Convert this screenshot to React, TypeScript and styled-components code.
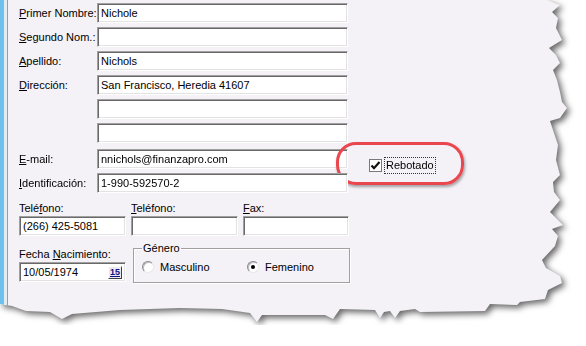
import React from 'react'
import styled, { createGlobalStyle } from 'styled-components'

const GlobalStyle = createGlobalStyle`
body {
    margin: 0;
    background: #ffffff;
    font-family: "Liberation Sans", Arial, sans-serif;
    font-size: 11px;
    color: #000;
}
`

const torn = `polygon(
0px 0px, 547px 0px, 552px 2px, 560px 5px, 552px 12px, 558px 18px, 556px 28px, 562px 40px,
549px 48px, 556px 55px, 560px 63px, 553px 70px, 557px 80px, 560px 92px, 562px 102px, 567px 108px,
560px 118px, 550px 121px, 553px 130px, 558px 145px, 556px 160px, 560px 175px, 553px 182px,
554px 192px, 560px 200px, 550px 212px, 558px 220px, 563px 225px, 552px 229px, 558px 236px,
555px 246px, 542px 260px, 546px 268px, 560px 276px, 562px 283px, 548px 290px, 545px 299px,
520px 302px, 517px 305px, 490px 304px, 485px 311px, 420px 312px, 415px 309px, 400px 311px,
395px 318px, 390px 311px, 384px 312px, 380px 318px, 375px 310px, 340px 309px, 333px 319px,
325px 315px, 262px 315px, 257px 322px, 250px 313px, 222px 309px, 180px 308px, 120px 310px,
72px 314px, 62px 319px, 50px 312px, 26px 311px, 12px 306px, 0px 304px)`

const Sheet = styled.div`
width: 586px;
filter: drop-shadow(3px 3px 3px rgba(0, 0, 0, 0.6));
`

const Paper = styled.div`
height: 325px;
display: flex;
background: #f4f1f7;
clip-path: ${torn};
`

const FrameEdge = styled.div`
width: 8px;
flex-shrink: 0;
background: linear-gradient(to right, #6fc1ed 0 4px, #e2ebf1 4px 7px, #9c9c9c 7px 8px);
`

const Form = styled.div`
padding: 3px 0 0 11px;
display: flex;
flex-direction: column;
`

const FieldRow = styled.div<{ $gapTop?: number }>`
position: relative;
display: grid;
grid-template-columns: 78px 251px;
align-items: center;
margin-top: ${p => p.$gapTop ?? 4}px;
&:first-child { margin-top: 0; }
`

const Label = styled.span`
line-height: 13px;
white-space: nowrap;
`

const TextBox = styled.div<{ $w?: number }>`
box-sizing: border-box;
width: ${p => (p.$w ? `${p.$w}px` : '100%')};
height: 20px;
padding: 0 3px;
display: flex;
align-items: center;
background: #fff;
border: 1px solid;
border-color: #a0a0a0 #ffffff #ffffff #a0a0a0;
box-shadow: inset 1px 1px 0 #696969, inset -1px -1px 0 #e3e3e3;
white-space: nowrap;
`

const Highlight = styled.div`
position: absolute;
left: 317px;
top: -7px;
width: 128px;
height: 43px;
box-sizing: border-box;
border: 3px solid #e9464d;
border-radius: 20px;
box-shadow: 1px 2px 3px rgba(0, 0, 0, 0.35);
display: flex;
align-items: center;
padding: 4px 0 0 30px;
`

const CheckBox = styled.span`
box-sizing: border-box;
width: 13px;
height: 13px;
background: #fff;
border: 1px solid #7a7a7a;
display: flex;
align-items: center;
justify-content: center;
`

const FocusText = styled.span`
margin-left: 3px;
padding: 1px 1px;
line-height: 13px;
outline: 1px dotted #333;
`

const PhoneGrid = styled.div`
display: grid;
grid-template-columns: 107px 107px 106px;
column-gap: 5px;
row-gap: 1px;
margin-top: 9px;
`

const BottomRow = styled.div`
display: flex;
align-items: flex-start;
margin-top: 12px;
`

const DateColumn = styled.div`
display: flex;
flex-direction: column;
gap: 1px;
`

const CalendarButton = styled.span`
margin-left: auto;
width: 14px;
height: 13px;
box-sizing: border-box;
border: 1px solid;
border-color: #fff #404040 #404040 #fff;
background: #ece9f0;
color: #0b1280;
font-size: 9px;
font-weight: bold;
line-height: 10px;
text-align: center;
text-decoration: underline;
`

const GroupBox = styled.fieldset`
margin: -6px 0 0 7px;
padding: 0 8px 3px;
width: 217px;
height: 41px;
box-sizing: border-box;
border: 1px solid #a0a0a0;
box-shadow: inset 1px 1px 0 #fff, 1px 1px 0 #fff;
display: flex;
align-items: center;
> legend {
    padding: 0 1px;
    margin-left: 0;
    line-height: 13px;
}
`

const RadioOption = styled.span<{ $w: number }>`
width: ${p => p.$w}px;
display: flex;
align-items: center;
gap: 6px;
`

const RadioDot = styled.span<{ $on?: boolean }>`
box-sizing: border-box;
width: 12px;
height: 12px;
border-radius: 50%;
background: #fff;
border: 1px solid;
border-color: #8a8a8a #e8e8e8 #e8e8e8 #8a8a8a;
box-shadow: inset 1px 1px 0 #c0c0c0;
display: flex;
align-items: center;
justify-content: center;
&::after {
    content: '';
    width: 4px;
    height: 4px;
    border-radius: 50%;
    background: ${p => (p.$on ? '#000' : 'transparent')};
}
`

const Check = () => (
    <svg width="11" height="11" viewBox="0 0 11 11">
        <path d="M1.5 5.5 L4 8.2 L9.5 2" fill="none" stroke="#111" strokeWidth="2.2" />
    </svg>
)

const rows: [React.ReactNode, string][] = [
    [<><u>P</u>rimer Nombre:</>, 'Nichole'],
    [<><u>S</u>egundo Nom.:</>, ''],
    [<><u>A</u>pellido:</>, 'Nichols'],
    [<><u>D</u>irección:</>, 'San Francisco, Heredia 41607'],
    ['', ''],
    ['', ''],
]

export default function App() {
    return (
        <>
            <GlobalStyle />
            <Sheet>
                <Paper>
                    <FrameEdge />
                    <Form>
                        {rows.map(([label, value], i) => (
                            <FieldRow key={i}>
                                <Label>{label}</Label>
                                <TextBox>{value}</TextBox>
                            </FieldRow>
                        ))}
                        <FieldRow $gapTop={6}>
                            <Label><u>E</u>-mail:</Label>
                            <TextBox>nnichols@finanzapro.com</TextBox>
                            <Highlight>
                                <CheckBox><Check /></CheckBox>
                                <FocusText>Rebotado</FocusText>
                            </Highlight>
                        </FieldRow>
                        <FieldRow>
                            <Label><u>I</u>dentificación:</Label>
                            <TextBox>1-990-592570-2</TextBox>
                        </FieldRow>
                        <PhoneGrid>
                            <Label>Telé<u>f</u>ono:</Label>
                            <Label><u>T</u>eléfono:</Label>
                            <Label><u>F</u>ax:</Label>
                            <TextBox>(266) 425-5081</TextBox>
                            <TextBox />
                            <TextBox />
                        </PhoneGrid>
                        <BottomRow>
                            <DateColumn>
                                <Label>Fecha <u>N</u>acimiento:</Label>
                                <TextBox $w={107}>
                                    10/05/1974
                                    <CalendarButton>15</CalendarButton>
                                </TextBox>
                            </DateColumn>
                            <GroupBox>
                                <legend>Género</legend>
                                <RadioOption $w={105}>
                                    <RadioDot />
                                    Masculino
                                </RadioOption>
                                <RadioOption $w={90}>
                                    <RadioDot $on />
                                    Femenino
                                </RadioOption>
                            </GroupBox>
                        </BottomRow>
                    </Form>
                </Paper>
            </Sheet>
        </>
    )
}
